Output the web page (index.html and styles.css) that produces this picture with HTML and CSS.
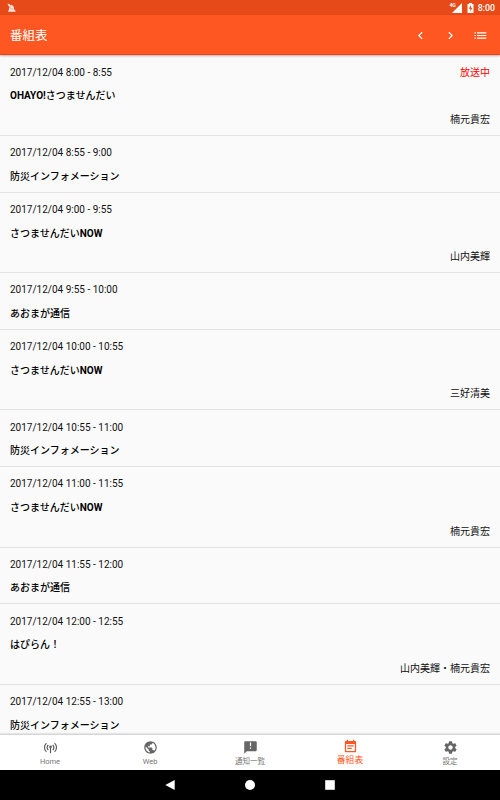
FILE: index.html
```
<!DOCTYPE html>
<html lang="ja">
<head>
<meta charset="utf-8">
<title>番組表</title>
<link rel="stylesheet" href="styles.css">
</head>
<body>
<div class="screen">
  <div class="status">
    <svg class="notice" viewBox="0 0 10 10"><path d="M.5.700 2.500 1 3.500 2.200 5 2l1.700 1.800.6 3 1.200.8v1.200H1.200V7.500L2 7V4.500z" fill="#fff" opacity=".85"/><path d="m.5 2.500 3 2.500M4.500 6h1" stroke="#e64a19" stroke-width=".8"/></svg>
    <span class="network">4G</span>
    <svg class="signal" viewBox="0 0 10 10"><path d="M10 0v10H0z" fill="#fff"/></svg>
    <svg class="battery" viewBox="0 0 7 10"><path d="M2 0h3v1h1.500v9H.5V1H2z" fill="#fff"/><path d="M4 2 1.800 5.700h1.500V8.500l2.100-3.700H4z" fill="#e64a19"/></svg>
    <span class="clock">8:00</span>
  </div>
  <header class="appbar">
    <h1>番組表</h1>
    <svg class="action" viewBox="0 0 24 24"><path d="M15.400 7.400 14 6l-6 6 6 6 1.400-1.400-4.600-4.600z"/></svg>
    <svg class="action" viewBox="0 0 24 24"><path d="m10 6-1.400 1.400 4.600 4.600-4.600 4.600L10 18l6-6z"/></svg>
    <svg class="action" viewBox="0 0 15 15"><path d="M1.500 4.300h1.300v1.200H1.500zM1.500 6.900h1.300v1.200H1.500zM1.500 9.500h1.300v1.200H1.500zM4 4.300h9.300v1.200H4zM4 6.900h9.300v1.200H4zM4 9.500h9.300v1.200H4z"/></svg>
  </header>
  <main class="list">
    <article class="row"><div class="line"><time>2017/12/04 8:00 - 8:55</time><span class="live">放送中</span></div><h2><b>OHAYO!</b>さつませんだい</h2><p>楠元貴宏</p></article>
    <article class="row"><div class="line"><time>2017/12/04 8:55 - 9:00</time></div><h2>防災インフォメーション</h2></article>
    <article class="row"><div class="line"><time>2017/12/04 9:00 - 9:55</time></div><h2>さつませんだい<b>NOW</b></h2><p>山内美輝</p></article>
    <article class="row"><div class="line"><time>2017/12/04 9:55 - 10:00</time></div><h2>あおまが通信</h2></article>
    <article class="row"><div class="line"><time>2017/12/04 10:00 - 10:55</time></div><h2>さつませんだい<b>NOW</b></h2><p>三好清美</p></article>
    <article class="row"><div class="line"><time>2017/12/04 10:55 - 11:00</time></div><h2>防災インフォメーション</h2></article>
    <article class="row"><div class="line"><time>2017/12/04 11:00 - 11:55</time></div><h2>さつませんだい<b>NOW</b></h2><p>楠元貴宏</p></article>
    <article class="row"><div class="line"><time>2017/12/04 11:55 - 12:00</time></div><h2>あおまが通信</h2></article>
    <article class="row"><div class="line"><time>2017/12/04 12:00 - 12:55</time></div><h2>はぴらん！</h2><p>山内美輝・楠元貴宏</p></article>
    <article class="row"><div class="line"><time>2017/12/04 12:55 - 13:00</time></div><h2>防災インフォメーション</h2></article>
  </main>
  <nav class="tabs">
    <div class="tab"><svg viewBox="0 0 24 24"><g fill="none" stroke="#555" stroke-width="1.800"><path d="M8.500 16a5.200 5.200 0 0 1 0-8M15.500 8a5.200 5.200 0 0 1 0 8M5.500 19a9.500 9.500 0 0 1 0-14M18.500 5a9.500 9.500 0 0 1 0 14"/><path d="M12 12v9"/></g><circle cx="12" cy="11" r="2.300"/></svg><span>Home</span></div>
    <div class="tab"><svg viewBox="0 0 24 24"><path d="M12 2C6.480 2 2 6.480 2 12s4.480 10 10 10 10-4.480 10-10S17.520 2 12 2zm-1 17.930c-3.950-.49-7-3.850-7-7.930 0-.62.080-1.210.21-1.790L9 15v1c0 1.100.9 2 2 2v1.930zm6.900-2.540c-.26-.81-1-1.390-1.900-1.390h-1v-3c0-.55-.45-1-1-1H8v-2h2c.55 0 1-.45 1-1V7h2c1.100 0 2-.9 2-2v-.41c2.930 1.190 5 4.060 5 7.410 0 2.080-.8 3.970-2.100 5.390z"/></svg><span>Web</span></div>
    <div class="tab"><svg viewBox="0 0 24 24"><path d="M20 2H4c-1.100 0-2 .9-2 2v18l4-4h14c1.100 0 2-.9 2-2V4c0-1.100-.9-2-2-2zm-7 12h-2v-2h2v2zm0-4h-2V4h2v6z"/></svg><span>通知一覧</span></div>
    <div class="tab active"><svg viewBox="0 0 24 24"><path d="M17 10H7v2h10v-2zm2-7h-1V1h-2v2H8V1H6v2H5c-1.110 0-2 .9-2 2v14c0 1.100.89 2 2 2h14c1.100 0 2-.9 2-2V5c0-1.100-.9-2-2-2zm0 16H5V8h14v11zm-5-5H7v2h7v-2z"/></svg><span>番組表</span></div>
    <div class="tab"><svg viewBox="0 0 24 24"><path d="M19.430 12.980c.04-.32.070-.64.070-.98s-.03-.66-.07-.98l2.110-1.650c.19-.15.240-.42.120-.64l-2-3.460c-.12-.22-.39-.3-.61-.22l-2.490 1c-.52-.4-1.080-.73-1.690-.98l-.38-2.650C14.460 2.180 14.250 2 14 2h-4c-.25 0-.46.180-.49.420l-.38 2.650c-.61.250-1.170.590-1.690.980l-2.490-1c-.23-.09-.49 0-.61.220l-2 3.460c-.13.220-.07.490.120.640l2.110 1.650c-.04.320-.07.650-.07.980s.03.660.070.980l-2.110 1.650c-.19.150-.24.420-.12.640l2 3.460c.12.220.39.300.61.220l2.490-1c.52.400 1.080.730 1.690.980l.38 2.650c.03.240.24.420.49.420h4c.25 0 .46-.18.490-.42l.38-2.650c.61-.25 1.170-.59 1.690-.98l2.490 1c.23.090.49 0 .61-.22l2-3.460c.12-.22.070-.49-.12-.64l-2.110-1.650zM12 15.500c-1.930 0-3.500-1.570-3.500-3.500s1.570-3.500 3.500-3.500 3.500 1.570 3.500 3.500-1.570 3.500-3.500 3.500z"/></svg><span>設定</span></div>
  </nav>
  <div class="system">
    <svg viewBox="0 0 10 10"><path d="M9.700 0v10L.3 5z"/></svg>
    <svg viewBox="0 0 10 10"><circle cx="5" cy="5" r="5"/></svg>
    <svg viewBox="0 0 10 10"><path d="M.2.200h9.600v9.600H.2z"/></svg>
  </div>
</div>
</body>
</html>
```
FILE: styles.css
```
* { box-sizing: border-box; }
body { margin: 0; font-family: Roboto, "Noto Sans CJK JP", sans-serif; }
h1, h2, p { margin: 0; }
svg { display: block; flex: none; }
.screen { display: flex; flex-direction: column; width: 500px; height: 800px; overflow: hidden; background: #fafafa; }
.status { display: flex; align-items: center; height: 15px; flex: none; padding: 0 5px 0 7px; background: #e64a19; color: #fff; }
.notice { width: 10px; height: 10px; margin-right: auto; }
.network { align-self: flex-start; margin-top: 2px; font-size: 5px; line-height: 6px; font-weight: 700; }
.signal { width: 10px; height: 10px; margin-left: -4px; }
.battery { width: 7px; height: 10px; margin: 0 4px 0 5px; }
.clock { font-size: 8.800px; line-height: 16px; font-weight: 500; }
.appbar { display: flex; align-items: center; height: 40px; flex: none; padding: 0 12px 0 10px; gap: 15px; background: #ff5722; border-bottom: 1px solid #f5400f; box-shadow: 0 1px 2px rgba(0,0,0,.3); position: relative; color: #fff; }
.appbar h1 { margin-right: auto; font-size: 12.500px; font-weight: 400; }
.action { width: 15px; height: 15px; margin-top: 1px; fill: #fff; }
.list { height: 679px; flex: none; overflow: hidden; padding-top: .5px; }
.row { padding: 5.200px 10px 3.450px; border-bottom: 1px solid #e3e3e3; font-size: 10px; line-height: 23.600px; color: #111; }
.line { display: flex; justify-content: space-between; height: 23.600px; }
.row h2 { height: 23.600px; font-size: 10px; font-weight: 500; color: #000; }
.row b { font-weight: 700; }
.row p { height: 23.600px; text-align: right; }
.live { color: #f00; }
.tabs { display: flex; height: 36px; flex: none; background: #fff; border-top: 1px solid #d6d6d6; position: relative; box-shadow: 0 -1px 1px rgba(0,0,0,.08); }
.tab { display: flex; flex-direction: column; align-items: center; width: 100px; padding-top: 5px; font-size: 7.500px; line-height: 10px; color: #777; fill: #666; }
.tab svg { width: 15px; height: 15px; margin-bottom: 2px; }
.tab.active { padding-top: 4px; font-size: 8.800px; color: #ff5722; fill: #ff5722; }
.tab.active svg { margin-bottom: 1px; }
.system { display: flex; align-items: center; justify-content: center; gap: 70px; height: 30px; flex: none; background: #000; }
.system svg { width: 10px; height: 10px; fill: #fff; }
```
